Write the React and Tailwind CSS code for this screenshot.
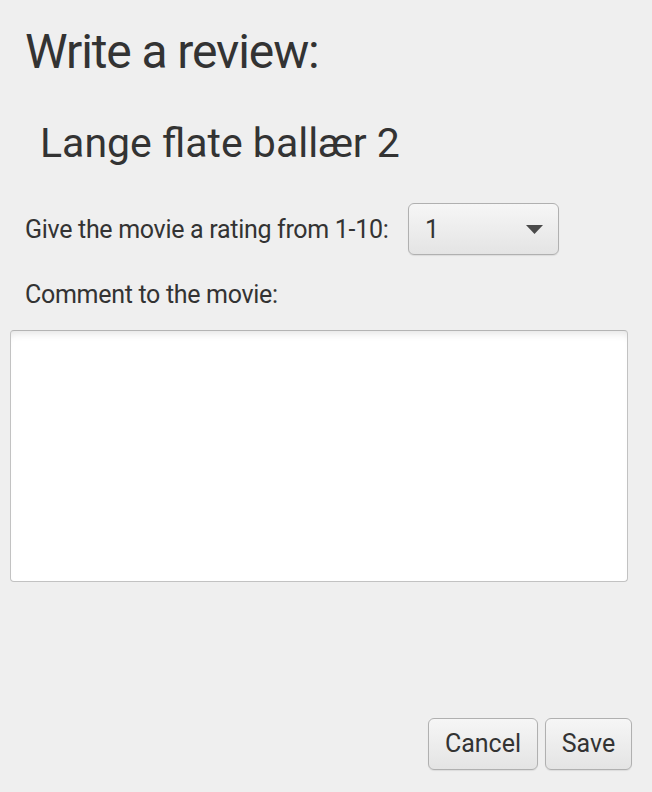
import React, { useState } from "react";

// Review dialog
export default function App() {
    const [rating] = useState("1");

    return (
        <div className="w-[652px] h-[792px] bg-[#efefef] text-[#333333] flex flex-col font-['Roboto','Liberation_Sans',sans-serif]">
            <div className="h-[48px] mt-[28px] pl-[25px] flex items-center text-[48px] leading-none tracking-[-1.1px]">
                Write a review:
            </div>

            <div className="h-[42px] mt-[46px] pl-[40px] flex items-center text-[41px] leading-none">
                Lange flate ballær 2
            </div>

            <div className="h-[52px] mt-[39px] pl-[25px] flex items-center">
                <span className="w-[383px] shrink-0 text-[25px] leading-none tracking-[-0.3px]">Give the movie a rating from 1-10:</span>
                <button className="w-[151px] h-[52px] rounded-[6px] border border-[#b0b0b0] bg-gradient-to-b from-[#f6f6f6] to-[#e4e4e4] shadow-[0_1px_1px_rgba(0,0,0,0.08)] flex items-center pl-[16px] pr-[15px]">
                    <span className="text-[25px] leading-none">{rating}</span>
                    <svg className="ml-auto" width="17" height="9" viewBox="0 0 17 9">
                        <path d="M0 0 L17 0 L8.5 9 Z" fill="#4a4a4a" />
                    </svg>
                </button>
            </div>

            <div className="h-[24px] mt-[27px] pl-[25px] flex items-center text-[25px] leading-none tracking-[-0.3px]">
                Comment to the movie:
            </div>

            <div className="mt-[24px] ml-[10px] w-[618px] h-[252px] bg-white rounded-[4px] border border-[#c2c2c2] border-t-[#b4b4b4] shadow-[inset_0_8px_8px_-6px_rgba(0,0,0,0.12)]">
                <textarea className="w-full h-full bg-transparent resize-none outline-none p-3 text-[25px]" />
            </div>

            <div className="mt-[136px] pr-[20px] flex justify-end gap-[7px]">
                <button className="w-[110px] h-[52px] rounded-[6px] border border-[#b0b0b0] bg-gradient-to-b from-[#f6f6f6] to-[#e4e4e4] shadow-[0_1px_1px_rgba(0,0,0,0.08)] text-[25px]">
                    Cancel
                </button>
                <button className="w-[87px] h-[52px] rounded-[6px] border border-[#b0b0b0] bg-gradient-to-b from-[#f6f6f6] to-[#e4e4e4] shadow-[0_1px_1px_rgba(0,0,0,0.08)] text-[25px]">
                    Save
                </button>
            </div>
        </div>
    );
}
